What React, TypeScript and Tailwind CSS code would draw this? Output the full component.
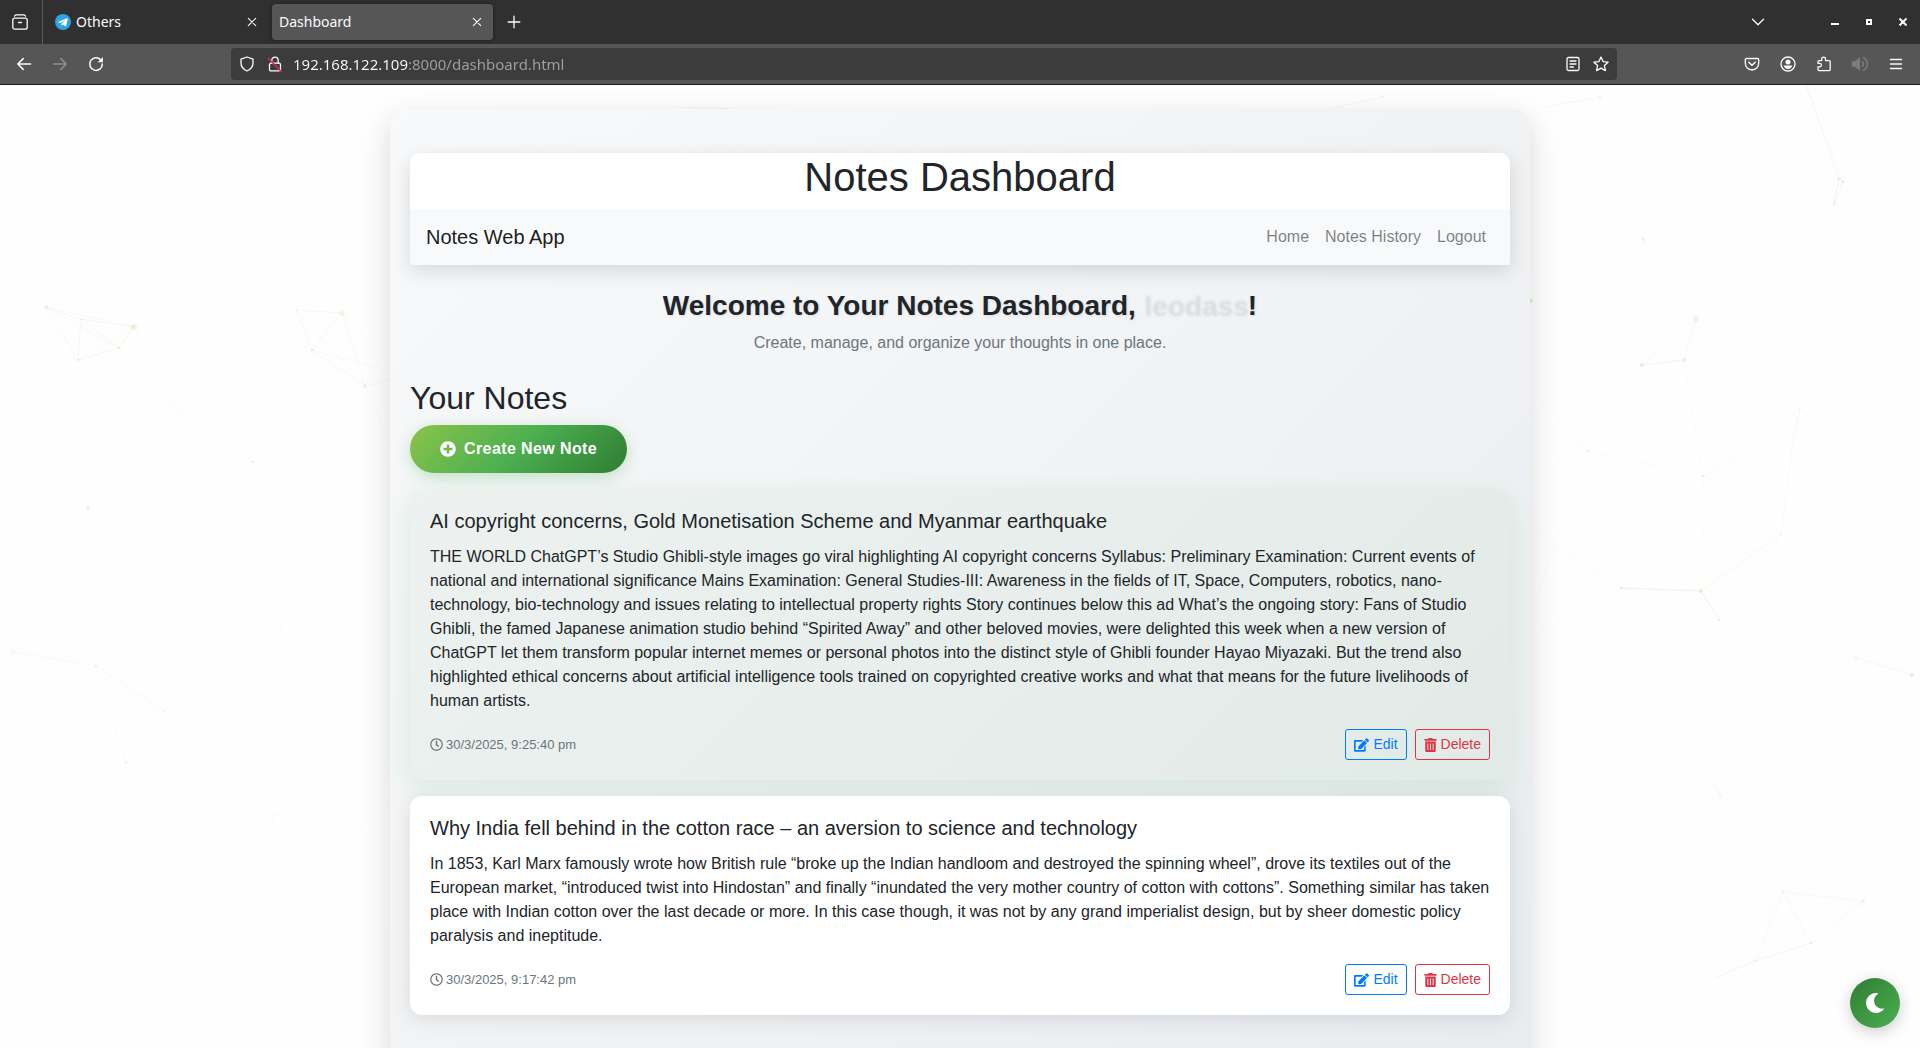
import type { ReactNode } from "react";
import { FaEdit, FaMoon, FaPlusCircle, FaRegClock, FaTrashAlt } from "react-icons/fa";

type Note = {
  title: string;
  body: string;
  time: string;
  active?: boolean;
};

const notes: Note[] = [
  {
    title: "AI copyright concerns, Gold Monetisation Scheme and Myanmar earthquake",
    body: "THE WORLD ChatGPT’s Studio Ghibli-style images go viral highlighting AI copyright concerns Syllabus: Preliminary Examination: Current events of national and international significance Mains Examination: General Studies-III: Awareness in the fields of IT, Space, Computers, robotics, nano-technology, bio-technology and issues relating to intellectual property rights Story continues below this ad What’s the ongoing story: Fans of Studio Ghibli, the famed Japanese animation studio behind “Spirited Away” and other beloved movies, were delighted this week when a new version of ChatGPT let them transform popular internet memes or personal photos into the distinct style of Ghibli founder Hayao Miyazaki. But the trend also highlighted ethical concerns about artificial intelligence tools trained on copyrighted creative works and what that means for the future livelihoods of human artists.",
    time: "30/3/2025, 9:25:40 pm",
    active: true,
  },
  {
    title: "Why India fell behind in the cotton race – an aversion to science and technology",
    body: "In 1853, Karl Marx famously wrote how British rule “broke up the Indian handloom and destroyed the spinning wheel”, drove its textiles out of the European market, “introduced twist into Hindostan” and finally “inundated the very mother country of cotton with cottons”. Something similar has taken place with Indian cotton over the last decade or more. In this case though, it was not by any grand imperialist design, but by sheer domestic policy paralysis and ineptitude.",
    time: "30/3/2025, 9:17:42 pm",
  },
];

/* Line segments of the particle network: x1, y1, x2, y2, opacity */
const links: number[][] = [
  [46, 222, 134, 242, 0.1], [46, 222, 81, 234, 0.12], [46, 222, 78, 275, 0.1], [46, 222, 119, 263, 0.1],
  [81, 234, 134, 242, 0.14], [81, 234, 78, 275, 0.12], [81, 234, 119, 263, 0.14], [134, 242, 119, 263, 0.18],
  [134, 242, 78, 275, 0.1], [78, 275, 119, 263, 0.14], [134, 242, 183, 329, 0.06], [119, 263, 183, 329, 0.06],
  [78, 275, 183, 329, 0.05], [183, 329, 253, 377, 0.07],
  [296, 225, 342, 228, 0.12], [296, 225, 312, 265, 0.12], [342, 228, 312, 265, 0.13], [312, 265, 365, 301, 0.13],
  [342, 228, 365, 301, 0.09], [296, 225, 365, 301, 0.07], [342, 228, 390, 275, 0.06], [312, 265, 390, 286, 0.08],
  [365, 301, 390, 295, 0.15], [365, 301, 390, 358, 0.06],
  [13, 567, 96, 581, 0.09], [96, 581, 164, 626, 0.1], [96, 581, 126, 678, 0.06], [164, 626, 126, 678, 0.08],
  [273, 728, 275, 808, 0.06], [273, 728, 355, 750, 0.06], [275, 808, 355, 750, 0.06], [355, 750, 390, 715, 0.06],
  [674, 22, 742, 24, 0.14], [1329, 24, 1383, 12, 0.14], [1541, 23, 1600, 12, 0.12],
  [1806, 0, 1839, 94, 0.12], [1806, 0, 1843, 97, 0.07], [1839, 94, 1834, 119, 0.2], [1843, 97, 1834, 119, 0.2],
  [1839, 94, 1843, 97, 0.2], [1811, 20, 1834, 119, 0.04],
  [1643, 154, 1696, 234, 0.06], [1643, 154, 1642, 280, 0.04], [1696, 234, 1642, 280, 0.09], [1696, 234, 1684, 275, 0.12],
  [1642, 280, 1684, 275, 0.18], [1642, 280, 1588, 366, 0.06], [1684, 275, 1703, 391, 0.05], [1684, 275, 1800, 324, 0.03],
  [1588, 366, 1530, 306, 0.05], [1588, 366, 1530, 336, 0.06], [1588, 366, 1530, 390, 0.05], [1588, 366, 1703, 391, 0.06],
  [1588, 366, 1543, 495, 0.05], [1703, 391, 1800, 324, 0.05], [1703, 391, 1794, 348, 0.07], [1800, 324, 1794, 348, 0.12],
  [1794, 348, 1781, 449, 0.08], [1703, 391, 1781, 449, 0.07], [1703, 391, 1701, 506, 0.06], [1781, 449, 1701, 506, 0.12],
  [1781, 449, 1719, 535, 0.06], [1556, 461, 1621, 503, 0.09], [1556, 461, 1530, 439, 0.08], [1556, 461, 1530, 530, 0.05],
  [1621, 503, 1701, 506, 0.25], [1701, 506, 1719, 535, 0.25], [1621, 503, 1719, 535, 0.06], [1621, 503, 1530, 553, 0.06],
  [1856, 573, 1912, 590, 0.12], [1712, 697, 1720, 710, 0.12], [1720, 710, 1783, 807, 0.05], [1783, 807, 1863, 816, 0.1],
  [1783, 807, 1811, 858, 0.12], [1783, 807, 1755, 876, 0.09], [1783, 807, 1717, 892, 0.06], [1863, 816, 1811, 858, 0.11],
  [1863, 816, 1755, 876, 0.04], [1811, 858, 1755, 876, 0.17], [1755, 876, 1717, 892, 0.18], [1811, 858, 1852, 894, 0.05],
  [1863, 816, 1882, 888, 0.05],
];

/* Particles: x, y, radius, opacity */
const dots: number[][] = [
  [46, 222, 2, 0.25], [134, 242, 3, 0.25], [81, 234, 1, 0.2], [119, 263, 1, 0.4], [78, 275, 1, 0.3],
  [253, 377, 1, 0.4], [88, 423, 2, 0.25], [342, 228, 3, 0.15], [296, 225, 1, 0.2], [312, 265, 1, 0.5],
  [365, 301, 2, 0.18], [13, 567, 3, 0.08], [96, 581, 2, 0.15], [164, 626, 1, 0.25], [126, 678, 1, 0.3],
  [281, 541, 2, 0.06], [1531, 216, 2, 0.4], [1600, 12, 2, 0.12], [1839, 94, 2, 0.2], [1843, 97, 1, 0.5],
  [1834, 119, 1, 0.3], [1643, 154, 2, 0.2], [1696, 234, 3, 0.22], [1684, 275, 2, 0.22], [1642, 280, 2, 0.3],
  [1588, 366, 1, 0.25], [1703, 391, 1, 0.4], [1800, 324, 1, 0.25], [1781, 449, 1, 0.25], [1621, 503, 1, 0.45],
  [1701, 506, 2, 0.3], [1719, 535, 1, 0.3], [1856, 573, 2, 0.1], [1912, 590, 2, 0.28], [1720, 710, 1, 0.3],
  [1863, 816, 2, 0.25], [1783, 807, 1, 0.25], [1811, 858, 1, 0.35], [1755, 876, 1, 0.2], [1383, 12, 1, 0.25],
];

function ParticleNetwork() {
  return (
    <svg className="pointer-events-none absolute inset-0 h-full w-full opacity-65" aria-hidden="true">
      {links.map(([x1, y1, x2, y2, o], i) => (
        <line key={i} x1={x1} y1={y1} x2={x2} y2={y2} stroke="#8bc34a" strokeWidth="1" opacity={o} />
      ))}
      {dots.map(([x, y, r, o], i) => (
        <circle key={i} cx={x} cy={y} r={r} fill="#8bc34a" opacity={o} />
      ))}
    </svg>
  );
}

function Glyph({ children }: { children: ReactNode }) {
  return (
    <svg
      viewBox="0 0 16 16"
      className="size-4 shrink-0"
      fill="none"
      stroke="currentColor"
      strokeWidth="1.3"
      strokeLinecap="round"
      strokeLinejoin="round"
      aria-hidden="true"
    >
      {children}
    </svg>
  );
}

function ChromeButton({ label, children, className = "" }: { label: string; children: ReactNode; className?: string }) {
  return (
    <button type="button" aria-label={label} className={`flex size-9 shrink-0 items-center justify-center ${className}`}>
      {children}
    </button>
  );
}

function WindowButton({ label, children }: { label: string; children: ReactNode }) {
  return (
    <button type="button" aria-label={label} className="flex h-9 w-[34px] items-center justify-center">
      {children}
    </button>
  );
}

function CloseTab() {
  return (
    <button type="button" aria-label="Close tab" className="flex size-6 items-center justify-center">
      <Glyph>
        <path d="M4.3 4.3l7.4 7.4M11.7 4.3l-7.4 7.4" strokeWidth="1.1" />
      </Glyph>
    </button>
  );
}

function TabStrip() {
  return (
    <div className="flex h-11 items-center bg-[#303030] text-sm text-[#fbfbfe]">
      <div className="flex h-full w-[43px] items-center justify-center border-r border-[#5c5c5c] pr-0.5">
        <button type="button" aria-label="View recent browsing" className="flex">
          <Glyph>
            <path d="M2.500 2.200C2.700 1.300 3.300.8 4.200.8h7.600c.9 0 1.500.5 1.700 1.400" />
            <rect x=".8" y="4.200" width="14.400" height="11" rx="2" />
            <path d="M6.500 8.500h3" />
          </Glyph>
        </button>
      </div>
      <div className="flex h-9 w-[229px] items-center pl-3 pr-2">
        <svg viewBox="0 0 16 16" className="size-4" aria-hidden="true">
          <circle cx="8" cy="8" r="8" fill="#2ca5e0" />
          <path
            d="M2.9 7.9L12 4.3c.5-.2.8.1.7.6l-1.5 6.9c-.1.5-.4.6-.8.4L8 10.5 6.900 11.600c-.2.2-.5.2-.5-.2l.1-1.700 4.200-3.900-5.200 3.300-2.500-.8c-.5-.1-.5-.3-.1-.4z"
            fill="#fff"
          />
        </svg>
        <span className="ml-[5px] flex-1">Others</span>
        <CloseTab />
      </div>
      <div className="flex h-9 w-[221px] items-center rounded bg-[#565656] pl-[7px] pr-1 shadow-[0_0_4px_rgba(0,0,0,0.4)]">
        <span className="flex-1">Dashboard</span>
        <CloseTab />
      </div>
      <ChromeButton label="New tab" className="ml-[3px]">
        <Glyph>
          <path d="M8 2.200v11.600M2.200 8h11.600" />
        </Glyph>
      </ChromeButton>
      <ChromeButton label="List all tabs" className="ml-auto">
        <Glyph>
          <path d="M2.500 5.200L8 10.700l5.500-5.500" />
        </Glyph>
      </ChromeButton>
      <div className="ml-[42px] flex text-white">
        <WindowButton label="Minimize">
          <span className="mt-1 h-0.5 w-2 bg-current" />
        </WindowButton>
        <WindowButton label="Maximize">
          <span className="size-1.5 border-2 border-current" />
        </WindowButton>
        <WindowButton label="Close">
          <svg viewBox="0 0 8 8" className="size-2" stroke="currentColor" strokeWidth="2" aria-hidden="true">
            <path d="M0.500 0.500l7 7M7.500 0.500l-7 7" />
          </svg>
        </WindowButton>
      </div>
    </div>
  );
}

function Toolbar() {
  return (
    <div className="flex h-[41px] items-center border-b border-[#1c1b22] bg-[#565656] px-1.5 text-[#fbfbfe]">
      <ChromeButton label="Back">
        <Glyph>
          <path d="M14.500 8H1.800M7.200 2.600L1.800 8l5.400 5.400" strokeWidth="1.500" />
        </Glyph>
      </ChromeButton>
      <ChromeButton label="Forward" className="text-[#8f8f90]">
        <Glyph>
          <path d="M1.500 8h12.700M8.800 2.600L14.200 8l-5.400 5.400" strokeWidth="1.500" />
        </Glyph>
      </ChromeButton>
      <ChromeButton label="Reload">
        <Glyph>
          <path d="M12.800 4A6.300 6.300 0 1 0 14.300 8" strokeWidth="1.500" />
          <path d="M14.900 1v5.200H9.700z" fill="currentColor" stroke="none" />
        </Glyph>
      </ChromeButton>
      <div className="mx-[117px] flex h-8 flex-1 items-center rounded bg-[#3c3c3c] px-2">
        <Glyph>
          <path d="M8 1l6 2.200v3.600c0 3.700-2.400 6.700-6 8.200-3.600-1.500-6-4.500-6-8.200V3.200z" />
        </Glyph>
        <div className="ml-3 flex">
          <Glyph>
            <rect x="2.500" y="7.200" width="11" height="7.700" rx="1.500" />
            <path d="M4.800 7V4.300a3.200 3.200 0 0 1 6.400 0V7" />
            <path d="M1.500 2.500l12.700 13" stroke="#e22850" strokeWidth="1.500" />
          </Glyph>
        </div>
        <input
          aria-label="Address"
          defaultValue="192.168.122.109:8000/dashboard.html"
          className="ml-2.5 h-6 min-w-0 flex-1 bg-[linear-gradient(to_right,#fbfbfe_115px,#a0a0a1_115px)] bg-clip-text text-[15px] leading-6 text-transparent outline-none"
        />
        <button type="button" aria-label="Reader view" className="flex">
          <Glyph>
            <rect x="2" y="1.500" width="12" height="13" rx="1.500" />
            <path d="M5 5h6M5 8h6M5 11h3.500" />
          </Glyph>
        </button>
        <button type="button" aria-label="Bookmark this page" className="ml-3 flex">
          <Glyph>
            <path d="M8 1l2.100 4.600 5 .6-3.700 3.400 1 5L8 12.100l-4.400 2.500 1-5L.9 6.200l5-.6z" />
          </Glyph>
        </button>
      </div>
      <ChromeButton label="Save to Pocket">
        <Glyph>
          <path d="M2.500 2.500h11c.7 0 1.200.5 1.200 1.200v3.600a6.700 6.700 0 0 1-13.400 0V3.700c0-.7.5-1.200 1.200-1.200z" />
          <path d="M4.800 6.300L8 9.300l3.200-3" strokeWidth="1.500" />
        </Glyph>
      </ChromeButton>
      <ChromeButton label="Account">
        <Glyph>
          <circle cx="8" cy="8" r="7" />
          <circle cx="8" cy="6" r="2.500" fill="currentColor" stroke="none" />
          <path d="M3.800 9.600h8.400a4.300 4.300 0 0 1-8.400 0z" fill="currentColor" stroke="none" />
        </Glyph>
      </ChromeButton>
      <ChromeButton label="Extensions">
        <Glyph>
          <path d="M5.700 4.600V3a1.900 1.900 0 0 1 3.800 0v1.600h3.700a1 1 0 0 1 1 1v8a1 1 0 0 1-1 1H3a1 1 0 0 1-1-1v-2.800h1.700a1.700 1.700 0 0 0 0-3.400H2V5.600a1 1 0 0 1 1-1z" />
        </Glyph>
      </ChromeButton>
      <ChromeButton label="Sound" className="text-[#7c7c7d]">
        <Glyph>
          <path d="M0 5.200h3L8 1v14l-5-4.200H0z" fill="currentColor" stroke="none" />
          <path d="M10.300 5.500a3.500 3.500 0 0 1 0 5M11.500 1.800a7 7 0 0 1 0 12.400" strokeWidth="1.600" />
        </Glyph>
      </ChromeButton>
      <ChromeButton label="Open application menu">
        <Glyph>
          <path d="M2.500 3.500h11M2.500 8h11M2.500 12.500h11" />
        </Glyph>
      </ChromeButton>
    </div>
  );
}

function NoteCard({ note }: { note: Note }) {
  return (
    <article
      className={
        note.active
          ? "mb-4 rounded-xl bg-[linear-gradient(135deg,#edf2f0,#e2eae7)] p-5 shadow-[0_8px_25px_rgba(76,175,80,0.15)]"
          : "relative mb-4 rounded-xl bg-white p-5 shadow-[0_4px_20px_rgba(0,0,0,0.1)]"
      }
    >
      <h3 className="mb-3 text-xl leading-6">{note.title}</h3>
      <p className="mb-4">{note.body}</p>
      <div className="flex items-center justify-between">
        <time className="flex items-center gap-[3px] text-[13px] text-[#6c757d]">
          <FaRegClock aria-hidden="true" />
          {note.time}
        </time>
        <div className="flex gap-2 text-sm leading-[21px]">
          <button type="button" className="flex items-center gap-1 rounded-[3px] border border-[#007bff] px-2 py-1 text-[#007bff]">
            <FaEdit className="w-[15px]" aria-hidden="true" />
            Edit
          </button>
          <button type="button" className="flex items-center gap-1 rounded-[3px] border border-[#dc3545] px-2 py-1 text-[#dc3545]">
            <FaTrashAlt className="w-[13px]" aria-hidden="true" />
            Delete
          </button>
        </div>
      </div>
    </article>
  );
}

export default function App() {
  return (
    <div className="flex h-screen flex-col overflow-hidden bg-[#fefefe]">
      <header className="font-['Noto_Sans',sans-serif]">
        <TabStrip />
        <Toolbar />
      </header>

      <div className="relative min-h-0 flex-1 overflow-hidden pt-6 font-['Liberation_Sans',sans-serif] text-base leading-6 text-[#212529]">
        <ParticleNetwork />
        <main className="relative mx-auto w-full max-w-[1140px] rounded-2xl bg-[linear-gradient(135deg,#f8f9fa,#e9ecef)] px-5 pb-16 pt-11 shadow-[0_10px_30px_rgba(0,0,0,0.15)]">
          <header className="mb-6 rounded-t-[10px] bg-white shadow-[0_6px_20px_rgba(0,0,0,0.13)]">
            <h1 className="pb-2 text-center text-[40px] leading-[48px]">Notes Dashboard</h1>
            <nav className="flex h-14 items-center justify-between bg-[#f8f9fa] px-4">
              <a href="#" className="text-xl text-black/90">
                Notes Web App
              </a>
              <div className="flex gap-4 px-2 text-black/50">
                <a href="#">Home</a>
                <a href="#">Notes History</a>
                <a href="#">Logout</a>
              </div>
            </nav>
          </header>

          <section className="mb-6 text-center">
            <h2 className="mb-2 text-[28px] font-bold leading-[34px] [text-shadow:1px_1px_3px_rgba(0,0,0,0.1)]">
              Welcome to Your Notes Dashboard, <span className="text-transparent">leodass</span>!
            </h2>
            <p className="text-[#6c757d]">Create, manage, and organize your thoughts in one place.</p>
          </section>

          <section>
            <h2 className="mb-2 text-[32px] leading-[38px]">Your Notes</h2>
            <button
              type="button"
              className="mb-4 flex h-12 items-center gap-2 rounded-full bg-[linear-gradient(135deg,#8bc34a,#4caf50_50%,#2e7d32)] px-[30px] font-bold tracking-wide text-white shadow-[0_4px_15px_rgba(76,175,80,0.3)]"
            >
              <FaPlusCircle aria-hidden="true" />
              Create New Note
            </button>
            {notes.map((note) => (
              <NoteCard key={note.time} note={note} />
            ))}
          </section>
        </main>

        <button
          type="button"
          aria-label="Toggle dark mode"
          className="absolute bottom-5 right-5 flex size-[50px] items-center justify-center rounded-full bg-[linear-gradient(135deg,#2e7d32,#4caf50)] text-xl text-white shadow-[0_4px_15px_rgba(0,0,0,0.2)]"
        >
          <FaMoon aria-hidden="true" />
        </button>
      </div>
    </div>
  );
}
